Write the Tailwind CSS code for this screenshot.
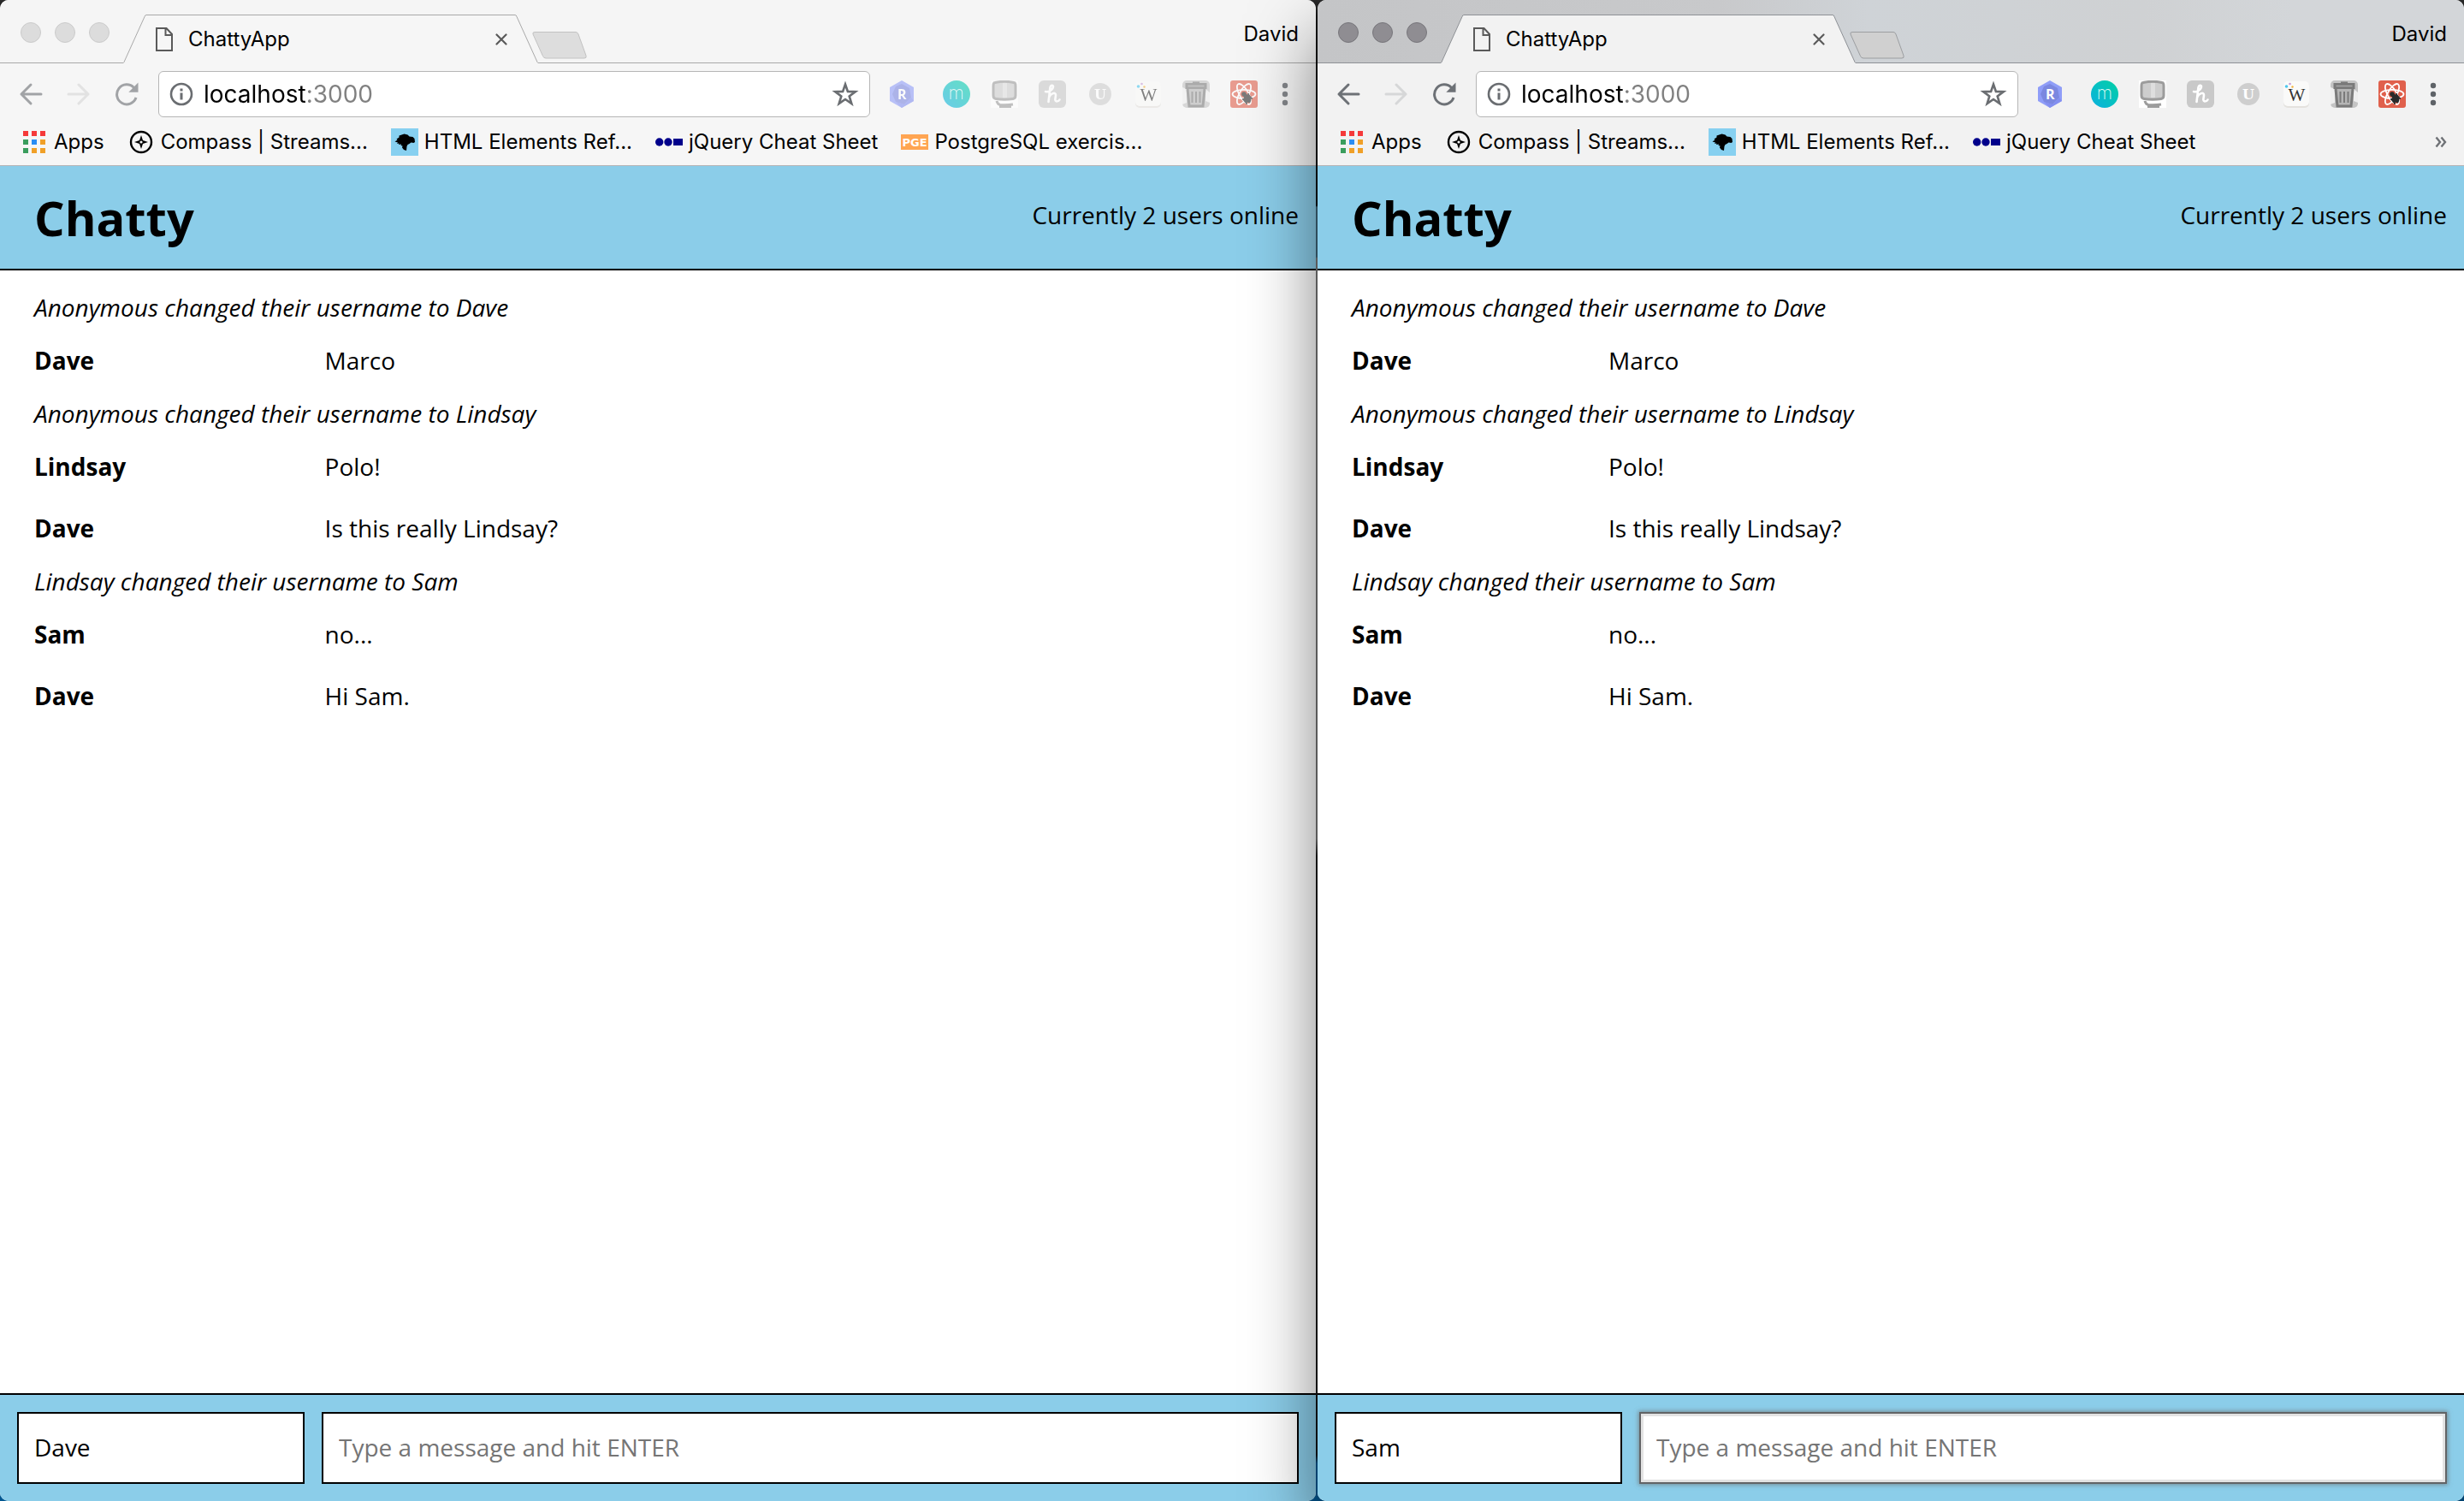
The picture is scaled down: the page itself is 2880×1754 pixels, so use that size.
<!DOCTYPE html>
<html lang="en">
<head>
<meta charset="utf-8">
<meta name="viewport" content="width=device-width, initial-scale=1">
<title>ChattyApp</title>
<script src="https://cdn.jsdelivr.net/npm/@tailwindcss/browser@4"></script>
</head>
<body class="bg-[#8494a6]">

<!-- Gradients must stay rendered for the icons that refer to them -->
<svg class="absolute size-0" aria-hidden="true">
  <linearGradient id="m-grad" x1="0" y1="1" x2="1" y2="0"><stop offset="0" stop-color="#0cb0e0"/><stop offset="1" stop-color="#02d0a4"/></linearGradient>
</svg>

<!-- Shared icon symbols -->
<svg class="hidden" aria-hidden="true">
  <symbol id="page" viewBox="0 0 20 28"><path d="M1 1h11.500l6.500 7v19H1zM11.500 1v8H19" fill="none" stroke="currentColor" stroke-width="2"/></symbol>
  <symbol id="close" viewBox="0 0 14 14"><path d="M1.500 1.500l11 11M12.500 1.500l-11 11" fill="none" stroke="currentColor" stroke-width="2.200" stroke-linecap="round"/></symbol>
  <symbol id="newtab" viewBox="0 0 66 34"><path d="M4 1.500h48q2 0 3 2.500l9 25q1 3-2 3H17q-2.500 0-3.500-2.500L2 4q-.8-2.500 2-2.500z" stroke-width="1"/></symbol>
  <symbol id="arrow" viewBox="0 0 28 28"><path d="M26 14H3M14 3L3 14l11 11" fill="none" stroke="currentColor" stroke-width="3" stroke-linecap="round" stroke-linejoin="round"/></symbol>
  <symbol id="reload" viewBox="0 0 28 28"><path d="M22.500 6.500A11.500 11.500 0 1 0 25 18" fill="none" stroke="currentColor" stroke-width="3"/><path d="M27.500.5v11.200H16.300z" fill="currentColor"/></symbol>
  <symbol id="info" viewBox="0 0 28 28"><circle cx="14" cy="14" r="12" fill="none" stroke="currentColor" stroke-width="2.600"/><path d="M12.500 7.500h3v3h-3zM12.500 12.500h3v8h-3z" fill="currentColor"/></symbol>
  <symbol id="star" viewBox="0 0 32 32"><path d="M16 4.500l2.900 8.400 8.900.2-7.100 5.400 2.600 8.500-7.300-5-7.300 5 2.600-8.500-7.100-5.400 8.900-.2z" fill="none" stroke="currentColor" stroke-width="2.600"/></symbol>

  <symbol id="apps" viewBox="0 0 32 32">
    <path d="M3 3h6v6H3zM13 3h6v6h-6zM23 3h6v6h-6z" fill="#f53a3a"/>
    <path d="M3 13h6v6H3zM3 23h6v6H3z" fill="#3a9d5d"/>
    <path d="M13 13h6v6h-6z" fill="#2a8df4"/>
    <path d="M23 13h6v6h-6zM13 23h6v6h-6zM23 23h6v6h-6z" fill="#f0a028"/>
  </symbol>
  <symbol id="compass" viewBox="0 0 32 32"><circle cx="16" cy="16" r="12" fill="none" stroke="#000" stroke-width="2.400"/><path d="M16 8l2 6 6 2-6 2-2 6-2-6-6-2 6-2z"/><circle cx="16" cy="16" r="1.600" fill="#f4f4f4"/></symbol>
  <symbol id="dino" viewBox="0 0 32 32"><rect width="32" height="32" fill="#87d0f0"/><path d="M4.500 15.500l3-2-1-1 3-2 0-2 3-1 3-1 4 1 2 2 4 .5 2 2 .5 4-1.500 1-3-.5-2 1.500-2 1-1 2-.5 5-3-1-2-2.500.5-2-2-.5.500-1.500-3 .5.500-1.500-2.500.5 1-1.500z"/></symbol>
  <symbol id="jq" viewBox="0 0 32 32"><circle cx="4.700" cy="16" r="4.700" fill="#00008b"/><circle cx="15" cy="16" r="4.700" fill="#00008b"/><path d="M21 12h11v8H21z" fill="#00008b"/></symbol>
  <symbol id="pge" viewBox="0 0 32 32"><rect y="7" width="32" height="18" fill="#ffa552"/><text x="16" y="21" text-anchor="middle" font-family="DejaVu Sans" font-weight="bold" font-size="13" fill="#fff">PGE</text></symbol>

  <symbol id="ext-r" viewBox="0 0 32 32"><path d="M16 0l14 8v16l-14 8-14-8V8z" fill="#8f9df8"/><path d="M16 4l9 5 2 11-8 8-10-3-4-9 4-9z" fill="#7b88e0"/><path d="M9 25l10 3 8-8 3 4-14 8z" fill="#838ff0"/><text x="16.300" y="21.500" text-anchor="middle" font-family="Open Sans" font-weight="bold" font-size="16" fill="#fff">R</text></symbol>
  <symbol id="ext-m" viewBox="0 0 32 32"><circle cx="16" cy="16" r="16" fill="url(#m-grad)"/><text x="16" y="22" text-anchor="middle" font-family="Inter" font-weight="200" font-size="21" fill="#d8f6f2">m</text></symbol>
  <symbol id="ext-monitor" viewBox="0 0 32 32"><path fill="#fff" d="M0 0h32v32H0z"/><path d="M5 2.500q11-2.500 22 0 2 0 2 4v11q0 3.500-3 4-10 1.500-20 0-3-.5-3-4v-11q0-4 2-4z" fill="#cdcdcd" stroke="#9c9c9c" stroke-width="3"/><path d="M14 3h5v17h-5z" fill="#dedede"/><path d="M7 24q1 4 4 4.500 8 .5 15-.5M10 31h14" fill="none" stroke="#9c9c9c" stroke-width="3"/></symbol>
  <symbol id="ext-h" viewBox="0 0 32 32"><rect width="32" height="32" rx="6" fill="#c9c9c9"/><path d="M8 13c3 1 9-2 9-6 0-2-3-1.500-3.500 1L11.500 25M12 20c2-5 8-7 8-3 0 3-2 7 1 7.500 1.500 0 3-1 3.500-2" fill="none" stroke="#fff" stroke-width="2.600" stroke-linecap="round"/></symbol>
  <symbol id="ext-u" viewBox="0 0 32 32"><circle cx="16" cy="16" r="13" fill="#cecece"/><text x="16" y="22" text-anchor="middle" font-family="DejaVu Serif" font-weight="bold" font-size="16" fill="#fff">U</text></symbol>
  <symbol id="ext-w" viewBox="0 0 32 32"><rect x="1" y="2" width="30" height="30" rx="5" fill="#e4e2de"/><rect x="1" y="1" width="30" height="29" rx="5" fill="#fafaf9"/><text x="16.500" y="24" text-anchor="middle" font-family="Liberation Serif" font-size="21" fill="#333">W</text><circle cx="4.500" cy="7" r="1.800" fill="#4cc7ee"/><circle cx="8.500" cy="4" r="1.300" fill="#c79ad6"/><circle cx="11.500" cy="7.500" r="1.200" fill="#f3b43c"/></symbol>
  <symbol id="ext-trash" viewBox="0 0 32 32"><rect width="32" height="32" rx="5" fill="#c4c4c4"/><path d="M0 8l5 2v16l-5 2zM32 14l-5-4v14l5 2z" fill="#eee"/><path d="M12 3V1.500h8V3h8.500v7h-25V3z" fill="#7a7a7a"/><path d="M6.500 6.500h19" stroke="#a8a8a8" stroke-width="1.500"/><path d="M6 10l2 20h16l2-20" fill="#b5b5b5" stroke="#7a7a7a" stroke-width="3"/><path d="M11.500 13v13M16 13v13M20.500 13v13" stroke="#7a7a7a" stroke-width="2"/></symbol>
  <symbol id="ext-react" viewBox="0 0 32 32"><rect width="32" height="32" rx="3" fill="#e0604c"/><g fill="none" stroke="#fff" stroke-width="1.800"><ellipse cx="16" cy="16" rx="13.500" ry="5.200"/><ellipse cx="16" cy="16" rx="13.500" ry="5.200" transform="rotate(60 16 16)"/><ellipse cx="16" cy="16" rx="13.500" ry="5.200" transform="rotate(120 16 16)"/></g><g stroke="#2a2a2a" stroke-width="1.600" fill="#2a2a2a"><circle cx="16" cy="16" r="2"/><ellipse cx="20" cy="21" rx="2.600" ry="4.600" transform="rotate(-35 20 21)"/><path d="M14 22l5-1 0 7M26 21l-5 0 0-6M17 25l3-2M23 26l-3-4"/></g></symbol>
  <symbol id="dots" viewBox="0 0 32 32"><circle cx="16" cy="6" r="3.200" fill="#5f6368"/><circle cx="16" cy="16" r="3.200" fill="#5f6368"/><circle cx="16" cy="26" r="3.200" fill="#5f6368"/></symbol>
  <symbol id="more" viewBox="0 0 14 14"><path d="M1.500 1.500L6 7l-4.500 5.500M7.500 1.500L12 7l-4.500 5.500" fill="none" stroke="#6f7276" stroke-width="2.400"/></symbol>
</svg>

<div class="grid min-h-screen grid-cols-[1538fr_1340fr] gap-[2px] bg-[linear-gradient(to_bottom,#2b2b2b_0,#111_20px,#050505_240px,#3d6478_242px,#3d6478_300px,#777_302px,#777_980px,#1a1a1a_1000px,#111_1700px,#005690_1710px)] font-[Inter,sans-serif] text-2xl text-black">

  <!-- Background window -->
  <section aria-label="Dave's browser" class="flex min-w-0 flex-col overflow-hidden rounded-[10px] bg-white">
    <div class="flex h-[74px] items-end border-b border-[#a9a9a9] bg-[#f5f5f5] pl-6">
      <div class="flex h-[47px] shrink-0 gap-4">
        <button aria-label="Close window" class="size-6 rounded-full border border-[#cbcbcb] bg-[#dcdcdc]"></button>
        <button aria-label="Minimize window" class="size-6 rounded-full border border-[#cbcbcb] bg-[#dcdcdc]"></button>
        <button aria-label="Zoom window" class="size-6 rounded-full border border-[#cbcbcb] bg-[#dcdcdc]"></button>
      </div>
      <div class="-mb-px ml-4 flex h-[57px] shrink-0">
        <svg class="h-[57px] w-[27px]" viewBox="0 0 27 57"><path d="M0 57l1-1.500L25 2.500Q25.500.5 27 .5V57z" fill="#f6f6f6"/><path d="M0 56.500l1-1L25 2.500Q25.500.5 27 .5" fill="none" stroke="#a9a9a9"/></svg>
        <div class="flex w-[431px] items-center border-t border-[#a9a9a9] bg-[#f6f6f6] pr-[9px] pl-[11px]">
          <svg class="h-7 w-5 text-[#5a5a5a]"><use href="#page"/></svg>
          <span class="ml-[18px] flex-1">ChattyApp</span>
          <button aria-label="Close tab" class="text-[#5a5a5a]"><svg class="size-[14px]"><use href="#close"/></svg></button>
        </div>
        <svg class="h-[57px] w-[27px]" viewBox="0 0 27 57"><path d="M27 57l-1-1.500L2 2.500Q1.500.5 0 .5V57z" fill="#f6f6f6"/><path d="M27 56.500l-1-1L2 2.500Q1.500.5 0 .5" fill="none" stroke="#a9a9a9"/></svg>
      </div>
      <button aria-label="New tab" class="-ml-2 h-[41px] shrink-0"><svg class="h-[34px] w-[66px] fill-[#dddddd] stroke-[#c2c2c2]"><use href="#newtab"/></svg></button>
      <button class="mr-5 ml-auto h-12 leading-[30px]"><span class="block h-12">David</span></button>
    </div>

    <div class="flex items-center bg-[#f6f6f6] pt-[9px] pr-5 pl-[22px] text-[#a1a3a6]">
      <button aria-label="Back"><svg class="size-7"><use href="#arrow"/></svg></button>
      <button aria-label="Forward" class="ml-7 rotate-180 text-[#e2e2e2]"><svg class="size-7"><use href="#arrow"/></svg></button>
      <button aria-label="Reload" class="ml-7"><svg class="size-7"><use href="#reload"/></svg></button>
      <div class="ml-[23px] flex h-[54px] min-w-0 flex-1 items-center rounded-[6px] border border-[#b6b6b6] bg-white pr-3 pl-3 text-[#6a6d71]">
        <svg class="size-7 shrink-0"><use href="#info"/></svg>
        <input aria-label="Address" value="localhost:3000" class="ml-3 min-w-0 flex-1 bg-[linear-gradient(to_right,#000_120px,#808080_120px)] bg-clip-text pt-[2px] text-[28px] text-transparent outline-none">
        <button aria-label="Bookmark this page"><svg class="size-8"><use href="#star"/></svg></button>
      </div>
      <div class="ml-[21px] flex shrink-0 items-center gap-6 opacity-60">
        <button aria-label="R extension" class="mr-2"><svg class="size-8"><use href="#ext-r"/></svg></button>
        <button aria-label="Momentum"><svg class="size-8"><use href="#ext-m"/></svg></button>
        <button aria-label="Monitor"><svg class="size-8"><use href="#ext-monitor"/></svg></button>
        <button aria-label="Honey"><svg class="size-8"><use href="#ext-h"/></svg></button>
        <button aria-label="U extension"><svg class="size-8"><use href="#ext-u"/></svg></button>
        <button aria-label="Wikiwand"><svg class="size-8"><use href="#ext-w"/></svg></button>
        <button aria-label="Trash"><svg class="size-8"><use href="#ext-trash"/></svg></button>
        <button aria-label="React tools"><svg class="size-8"><use href="#ext-react"/></svg></button>
      </div>
      <button aria-label="Menu" class="ml-4 opacity-75"><svg class="size-8"><use href="#dots"/></svg></button>
    </div>

    <nav aria-label="Bookmarks" class="flex h-[57px] items-center gap-[27px] border-b border-[#b6b4b6] bg-[#f6f6f6] px-6 pt-px whitespace-nowrap">
      <a href="#" class="flex items-center gap-[7px]"><svg class="size-8"><use href="#apps"/></svg>Apps</a>
      <a href="#" class="flex items-center gap-[7px]"><svg class="size-8"><use href="#compass"/></svg>Compass | Streams...</a>
      <a href="#" class="flex items-center gap-[7px]"><svg class="size-8"><use href="#dino"/></svg>HTML Elements Ref...</a>
      <a href="#" class="flex items-center gap-[7px]"><svg class="size-8"><use href="#jq"/></svg>jQuery Cheat Sheet</a>
      <a href="#" class="flex items-center gap-[7px]"><svg class="size-8"><use href="#pge"/></svg>PostgreSQL exercis...</a>
    </nav>

    <div class="flex flex-1 flex-col font-['Open_Sans',sans-serif] text-[28px] leading-[38px]">
      <header class="flex h-[122px] items-start justify-between border-b-2 border-black bg-[#8bcde9] pr-5 pl-10">
        <h1 class="text-[56px] leading-[120px] font-bold">Chatty</h1>
        <p class="leading-[114px]">Currently 2 users online</p>
      </header>
      <main class="flex-1 pt-[17px] pl-10">
        <p class="py-[7px] italic">Anonymous changed their username to Dave</p>
        <div class="flex py-[17px]"><b class="mr-10 w-1/5">Dave</b><span>Marco</span></div>
        <p class="py-[7px] italic">Anonymous changed their username to Lindsay</p>
        <div class="flex py-[17px]"><b class="mr-10 w-1/5">Lindsay</b><span>Polo!</span></div>
        <div class="flex py-[17px]"><b class="mr-10 w-1/5">Dave</b><span>Is this really Lindsay?</span></div>
        <p class="py-[7px] italic">Lindsay changed their username to Sam</p>
        <div class="flex py-[17px]"><b class="mr-10 w-1/5">Sam</b><span>no...</span></div>
        <div class="flex py-[17px]"><b class="mr-10 w-1/5">Dave</b><span>Hi Sam.</span></div>
      </main>
      <footer class="flex gap-5 border-t-2 border-black bg-[#8bcde9] p-5">
        <input aria-label="Username" value="Dave" class="h-[84px] w-[336px] border-2 border-black bg-white px-[18px] pb-[2px] outline-none">
        <input aria-label="Message" placeholder="Type a message and hit ENTER" class="h-[84px] min-w-0 flex-1 border-2 border-black bg-white px-[18px] pb-[2px] outline-none placeholder:text-[#757575]">
      </footer>
    </div>
  </section>

  <!-- Foreground window -->
  <section aria-label="Sam's browser" class="z-10 flex min-w-0 flex-col overflow-hidden rounded-[10px] bg-white shadow-[0_40px_80px_rgba(0,0,0,0.5)]">
    <div class="flex h-[74px] items-end border-b border-[#8e9196] bg-[linear-gradient(to_right,#c4c5c7_0,#c8c9cb_35%,#cfd3d7_48%,#cfd1d3_72%,#d3d6d9_85%)] pl-6">
      <div class="flex h-[47px] shrink-0 gap-4">
        <button aria-label="Close window" class="size-6 rounded-full border border-[#77767b] bg-[#8f8d92]"></button>
        <button aria-label="Minimize window" class="size-6 rounded-full border border-[#77767b] bg-[#8f8d92]"></button>
        <button aria-label="Zoom window" class="size-6 rounded-full border border-[#77767b] bg-[#8f8d92]"></button>
      </div>
      <div class="-mb-px ml-4 flex h-[57px] shrink-0">
        <svg class="h-[57px] w-[27px]" viewBox="0 0 27 57"><path d="M0 57l1-1.500L25 2.500Q25.500.5 27 .5V57z" fill="#f2f2f2"/><path d="M0 56.500l1-1L25 2.500Q25.500.5 27 .5" fill="none" stroke="#8e9196"/></svg>
        <div class="flex w-[431px] items-center border-t border-[#8e9196] bg-[#f2f2f2] pr-[9px] pl-[11px]">
          <svg class="h-7 w-5 text-[#5a5a5a]"><use href="#page"/></svg>
          <span class="ml-[18px] flex-1">ChattyApp</span>
          <button aria-label="Close tab" class="text-[#5a5a5a]"><svg class="size-[14px]"><use href="#close"/></svg></button>
        </div>
        <svg class="h-[57px] w-[27px]" viewBox="0 0 27 57"><path d="M27 57l-1-1.500L2 2.500Q1.500.5 0 .5V57z" fill="#f2f2f2"/><path d="M27 56.500l-1-1L2 2.500Q1.500.5 0 .5" fill="none" stroke="#8e9196"/></svg>
      </div>
      <button aria-label="New tab" class="-ml-2 h-[41px] shrink-0"><svg class="h-[34px] w-[66px] fill-[#d0d0d0] stroke-[#9c9ea1]"><use href="#newtab"/></svg></button>
      <button class="mr-5 ml-auto h-12 leading-[30px]"><span class="block h-12">David</span></button>
    </div>

    <div class="flex items-center bg-[#f2f2f2] pt-[9px] pr-5 pl-[22px] text-[#6d7176]">
      <button aria-label="Back"><svg class="size-7"><use href="#arrow"/></svg></button>
      <button aria-label="Forward" class="ml-7 rotate-180 text-[#d6d7d8]"><svg class="size-7"><use href="#arrow"/></svg></button>
      <button aria-label="Reload" class="ml-7"><svg class="size-7"><use href="#reload"/></svg></button>
      <div class="ml-[23px] flex h-[54px] min-w-0 flex-1 items-center rounded-[6px] border border-[#b6b6b6] bg-white pr-3 pl-3 text-[#6a6d71]">
        <svg class="size-7 shrink-0"><use href="#info"/></svg>
        <input aria-label="Address" value="localhost:3000" class="ml-3 min-w-0 flex-1 bg-[linear-gradient(to_right,#000_120px,#808080_120px)] bg-clip-text pt-[2px] text-[28px] text-transparent outline-none">
        <button aria-label="Bookmark this page"><svg class="size-8"><use href="#star"/></svg></button>
      </div>
      <div class="ml-[21px] flex shrink-0 items-center gap-6">
        <button aria-label="R extension" class="mr-2"><svg class="size-8"><use href="#ext-r"/></svg></button>
        <button aria-label="Momentum"><svg class="size-8"><use href="#ext-m"/></svg></button>
        <button aria-label="Monitor"><svg class="size-8"><use href="#ext-monitor"/></svg></button>
        <button aria-label="Honey"><svg class="size-8"><use href="#ext-h"/></svg></button>
        <button aria-label="U extension"><svg class="size-8"><use href="#ext-u"/></svg></button>
        <button aria-label="Wikiwand"><svg class="size-8"><use href="#ext-w"/></svg></button>
        <button aria-label="Trash"><svg class="size-8"><use href="#ext-trash"/></svg></button>
        <button aria-label="React tools"><svg class="size-8"><use href="#ext-react"/></svg></button>
      </div>
      <button aria-label="Menu" class="ml-4"><svg class="size-8"><use href="#dots"/></svg></button>
    </div>

    <nav aria-label="Bookmarks" class="flex h-[57px] items-center gap-[27px] border-b border-[#b6b4b6] bg-[#f2f2f2] pt-px pr-5 pl-6 whitespace-nowrap">
      <a href="#" class="flex items-center gap-[7px]"><svg class="size-8"><use href="#apps"/></svg>Apps</a>
      <a href="#" class="flex items-center gap-[7px]"><svg class="size-8"><use href="#compass"/></svg>Compass | Streams...</a>
      <a href="#" class="flex items-center gap-[7px]"><svg class="size-8"><use href="#dino"/></svg>HTML Elements Ref...</a>
      <a href="#" class="flex items-center gap-[7px]"><svg class="size-8"><use href="#jq"/></svg>jQuery Cheat Sheet</a>
      <button aria-label="More bookmarks" class="ml-auto"><svg class="size-[14px]"><use href="#more"/></svg></button>
    </nav>

    <div class="flex flex-1 flex-col font-['Open_Sans',sans-serif] text-[28px] leading-[38px]">
      <header class="flex h-[122px] items-start justify-between border-b-2 border-black bg-[#8bcde9] pr-5 pl-10">
        <h1 class="text-[56px] leading-[120px] font-bold">Chatty</h1>
        <p class="leading-[114px]">Currently 2 users online</p>
      </header>
      <main class="flex-1 pt-[17px] pl-10">
        <p class="py-[7px] italic">Anonymous changed their username to Dave</p>
        <div class="flex py-[17px]"><b class="mr-10 w-1/5">Dave</b><span>Marco</span></div>
        <p class="py-[7px] italic">Anonymous changed their username to Lindsay</p>
        <div class="flex py-[17px]"><b class="mr-10 w-1/5">Lindsay</b><span>Polo!</span></div>
        <div class="flex py-[17px]"><b class="mr-10 w-1/5">Dave</b><span>Is this really Lindsay?</span></div>
        <p class="py-[7px] italic">Lindsay changed their username to Sam</p>
        <div class="flex py-[17px]"><b class="mr-10 w-1/5">Sam</b><span>no...</span></div>
        <div class="flex py-[17px]"><b class="mr-10 w-1/5">Dave</b><span>Hi Sam.</span></div>
      </main>
      <footer class="flex gap-5 border-t-2 border-black bg-[#8bcde9] p-5">
        <input aria-label="Username" value="Sam" class="h-[84px] w-[336px] border-2 border-black bg-white px-[18px] pb-[2px] outline-none">
        <input aria-label="Message" placeholder="Type a message and hit ENTER" class="h-[84px] min-w-0 flex-1 border-2 border-[#626466] bg-white px-[18px] pb-[2px] shadow-[0_0_5px_1px_rgba(110,110,110,0.7),inset_0_0_0_3px_#e3e3e3] outline-none placeholder:text-[#757575]">
      </footer>
    </div>
  </section>
</div>
</body>
</html>
